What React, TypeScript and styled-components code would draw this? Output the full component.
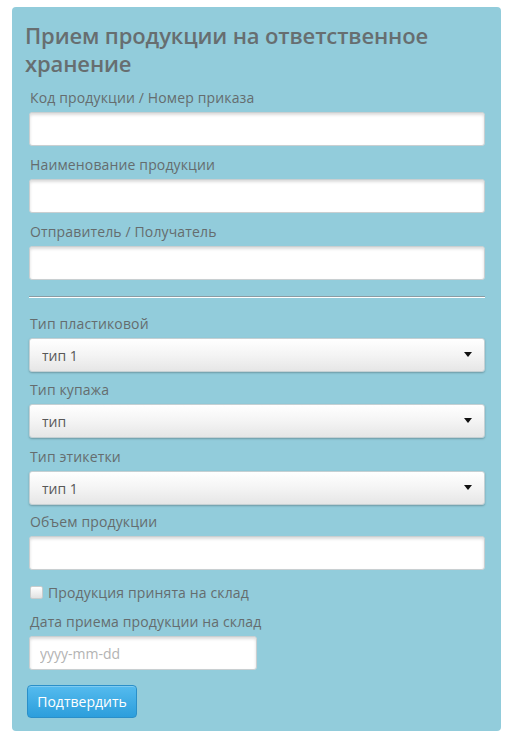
import React from 'react'
import styled, { createGlobalStyle } from 'styled-components'

const GlobalStyle = createGlobalStyle`
  html, body {
    margin: 0;
    padding: 0;
    background: #ffffff;
    font-family: "Open Sans", "Liberation Sans", sans-serif;
  }
  * {
    box-sizing: border-box;
  }
`

interface FieldProps {
  label: string
  gap?: number
  children: React.ReactNode
}

function Field({ label, gap = 9, children }: FieldProps) {
  return (
    <FieldGroup $gap={gap}>
      <Label>{label}</Label>
      {children}
    </FieldGroup>
  )
}

function SelectBox({ value }: { value: string }) {
  return (
    <SelectWrap>
      <Select defaultValue={value}>
        <option value={value}>{value}</option>
      </Select>
      <Caret />
    </SelectWrap>
  )
}

export default function App() {
  return (
    <>
      <GlobalStyle />
      <Page>
        <Panel>
          <Title>Прием продукции на ответственное хранение</Title>

          <Field label="Код продукции / Номер приказа">
            <TextInput type="text" />
          </Field>
          <Field label="Наименование продукции">
            <TextInput type="text" />
          </Field>
          <Field label="Отправитель / Получатель" gap={0}>
            <TextInput type="text" />
          </Field>

          <Divider />

          <Field label="Тип пластиковой" gap={8}>
            <SelectBox value="тип 1" />
          </Field>
          <Field label="Тип купажа">
            <SelectBox value="тип" />
          </Field>
          <Field label="Тип этикетки" gap={7}>
            <SelectBox value="тип 1" />
          </Field>
          <Field label="Объем продукции" gap={12}>
            <TextInput type="text" />
          </Field>

          <CheckRow>
            <CheckBox type="checkbox" />
            Продукция принята на склад
          </CheckRow>

          <Field label="Дата приема продукции на склад" gap={15}>
            <DateInput type="text" placeholder="yyyy-mm-dd" />
          </Field>

          <SubmitButton type="button">Подтвердить</SubmitButton>
        </Panel>
      </Page>
    </>
  )
}

// ページ全体
const Page = styled.div`
  padding: 7px 8px 10px 12px;
`

// 青いパネル
const Panel = styled.form`
  width: 489px;
  background: #92ccdb;
  border-radius: 4px;
  padding: 14px 16px 13px 13px;
  display: flex;
  flex-direction: column;
`

const Title = styled.h2`
  margin: 0 0 11px;
  font-size: 22px;
  line-height: 28px;
  font-weight: 600;
  letter-spacing: -0.12px;
  color: #676e70;
  padding-right: 40px;
`

const FieldGroup = styled.div<{ $gap: number }>`
  display: flex;
  flex-direction: column;
  gap: 4px;
  padding-left: 4px;
  margin-bottom: ${(p) => p.$gap}px;
`

const Label = styled.label`
  font-size: 14px;
  line-height: 20px;
  letter-spacing: 0.14px;
  color: #656c6e;
  padding-left: 1px;
`

const TextInput = styled.input`
  width: 456px;
  height: 34px;
  border: 1px solid #c9cfd1;
  border-radius: 3px;
  background: #ffffff;
  box-shadow: inset 0 2px 3px rgba(0, 0, 0, 0.14);
  padding: 6px 10px;
  font-family: inherit;
  font-size: 14px;
  color: #555;
  outline: none;
`

const DateInput = styled(TextInput)`
  width: 228px;
  height: 34px;

  &::placeholder {
    color: #b3b3b3;
  }
`

const Divider = styled.hr`
  margin: 16px 0 16px 4px;
  width: 456px;
  height: 0;
  border: 0;
  border-top: 1px solid #8a9ca3;
  border-bottom: 1px solid #ffffff;
`

const SelectWrap = styled.div`
  position: relative;
  width: 456px;
  height: 34px;
`

const Select = styled.select`
  appearance: none;
  width: 100%;
  height: 100%;
  border: 1px solid #c5d0d3;
  border-radius: 3px;
  background: linear-gradient(to bottom, #ffffff 0%, #f4f4f4 50%, #e6e6e6 100%);
  box-shadow: 0 1px 2px rgba(0, 0, 0, 0.25);
  padding: 0 30px 0 12px;
  font-family: inherit;
  font-size: 14px;
  color: #585858;
  outline: none;
`

const Caret = styled.span`
  position: absolute;
  right: 13px;
  top: 14px;
  width: 0;
  height: 0;
  border-left: 4px solid transparent;
  border-right: 4px solid transparent;
  border-top: 5px solid #111;
  pointer-events: none;
`

const CheckRow = styled.label`
  display: flex;
  align-items: center;
  gap: 5px;
  height: 20px;
  margin-bottom: 10px;
  padding-left: 5px;
  font-size: 14px;
  letter-spacing: 0.14px;
  color: #656c6e;
`

const CheckBox = styled.input`
  appearance: none;
  margin: 0;
  width: 13px;
  height: 13px;
  border: 1px solid #c8cccd;
  border-radius: 2px;
  background: linear-gradient(to bottom, #ffffff, #e2e2e2);
`

const SubmitButton = styled.button`
  align-self: flex-start;
  margin-left: 2px;
  width: 110px;
  height: 33px;
  border: 1px solid #2a8fc9;
  border-radius: 4px;
  background: linear-gradient(to bottom, #55bbee 0%, #2c9edc 100%);
  box-shadow: inset 0 1px 0 rgba(255, 255, 255, 0.25);
  font-family: inherit;
  font-size: 14px;
  color: #ffffff;
  padding: 0;
`
